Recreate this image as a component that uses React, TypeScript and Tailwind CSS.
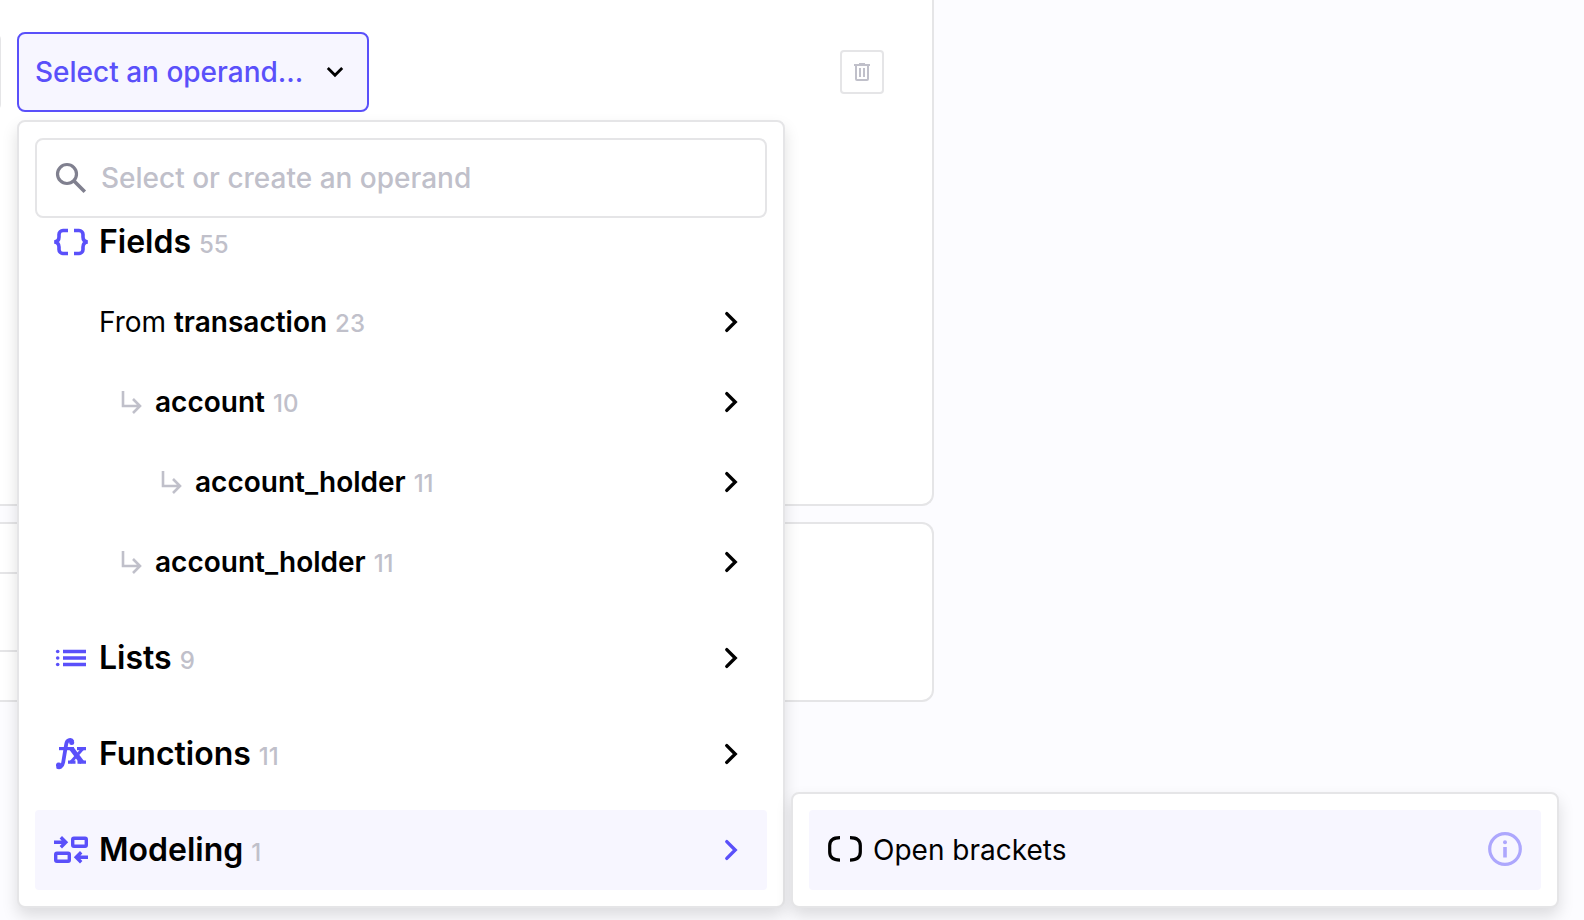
import type { ReactNode } from "react";

const ICON = "h-10 w-10 shrink-0";

function ChevronRight({ className = "" }: { className?: string }) {
  return (
    <svg viewBox="0 0 40 40" className={`${ICON} ${className}`} fill="none" stroke="currentColor" strokeWidth={3.4} aria-hidden>
      <path d="M15.8 11.6 24.2 20l-8.4 8.4" strokeLinecap="round" />
    </svg>
  );
}

function ChevronDown() {
  return (
    <svg viewBox="0 0 40 40" className={ICON} fill="none" stroke="currentColor" strokeWidth={2.8} aria-hidden>
      <path d="m12.8 16 7.2 7.2 7.2-7.2" />
    </svg>
  );
}

function SearchIcon() {
  return (
    <svg viewBox="0 0 40 40" className={`${ICON} text-[#80808f]`} fill="none" stroke="currentColor" strokeWidth={3.2} aria-hidden>
      <circle cx="16" cy="16" r="9.5" />
      <path d="m22.8 22.8 11 11" strokeWidth={3.6} />
    </svg>
  );
}

function TrashIcon() {
  return (
    <svg viewBox="0 0 24 24" className="h-6 w-6" fill="none" stroke="currentColor" strokeWidth={2} aria-hidden>
      <path d="M4 5h16M9 4h6M6 5v14a1 1 0 0 0 1 1h10a1 1 0 0 0 1-1V5M10 8v9M14 8v9" />
    </svg>
  );
}

function FieldsIcon() {
  return (
    <svg viewBox="0 0 40 40" className={ICON} fill="none" stroke="currentColor" strokeWidth={3.6} aria-hidden>
      <path d="M17 8.5h-5a4 4 0 0 0-4 4V15c0 3-1.500 4.600-4.600 5 3.100.4 4.600 2 4.600 5v2.500a4 4 0 0 0 4 4h5" />
      <path d="M23 8.5h5a4 4 0 0 1 4 4V15c0 3 1.500 4.600 4.600 5-3.100.4-4.600 2-4.600 5v2.500a4 4 0 0 1-4 4h-5" />
    </svg>
  );
}

function ListsIcon() {
  return (
    <svg viewBox="0 0 40 40" className={ICON} fill="currentColor" aria-hidden>
      <circle cx="6.7" cy="13.5" r="1.8" />
      <circle cx="6.7" cy="20" r="1.8" />
      <circle cx="6.7" cy="26.5" r="1.8" />
      <path d="M12 11.8h23v3.4H12zM12 18.3h23v3.4H12zM12 24.8h23v3.4H12z" />
    </svg>
  );
}

function FunctionsIcon() {
  return (
    <svg viewBox="0 0 40 40" className={ICON} fill="none" stroke="currentColor" aria-hidden>
      <circle cx="20.7" cy="8.5" r="2.5" fill="currentColor" stroke="none" />
      <circle cx="7.7" cy="31.3" r="2.7" fill="currentColor" stroke="none" />
      <path d="M21.5 7.5c-1-2.2-5.5-2.2-6.3 2.7l-3 18c-.8 4.8-4 6-6 4.3" strokeWidth={3.8} />
      <path d="M8 14.6h15" strokeWidth={3.2} />
      <path d="m20.5 14.5 10.5 14" strokeWidth={4.8} />
      <path d="M32 14.5 19.5 28.5" strokeWidth={3} />
      <path d="M26 14.6h9M17 28.2h7.5M26.5 28.2H35" strokeWidth={3.2} />
    </svg>
  );
}

function ModelingIcon() {
  return (
    <svg viewBox="0 0 40 40" className={ICON} fill="none" stroke="currentColor" strokeWidth={3.4} aria-hidden>
      <path d="M3 12.3h12M9.8 7.3l5 5-5 5" />
      <rect x="21.7" y="8.2" width="13.6" height="8" rx="1.2" />
      <rect x="4.7" y="23.2" width="13.6" height="8" rx="1.2" />
      <path d="M37 27.3H25M30.2 22.3l-5 5 5 5" />
    </svg>
  );
}

function BracketsIcon() {
  return (
    <svg viewBox="0 0 40 40" className={ICON} fill="none" stroke="currentColor" strokeWidth={3.2} aria-hidden>
      <path d="M15 7.6c-6.500 0-10.300 2-10.300 8v6.500c0 6 3.800 8 10.300 8M25 7.600c6.500 0 10.300 2 10.300 8v6.500c0 6-3.800 8-10.300 8" />
    </svg>
  );
}

function InfoIcon() {
  return (
    <svg viewBox="0 0 40 40" className={`${ICON} text-[#ada7fd]`} fill="none" stroke="currentColor" strokeWidth={3.2} aria-hidden>
      <circle cx="20" cy="19" r="15.3" />
      <circle cx="20" cy="12.3" r="2" fill="currentColor" stroke="none" />
      <path d="M20 17v10.5" strokeWidth={3.6} />
    </svg>
  );
}

function NestedIcon() {
  return (
    <svg viewBox="0 0 32 32" className="h-8 w-8 shrink-0 text-[#c0c0ca]" fill="none" stroke="currentColor" strokeWidth={2.6} aria-hidden>
      <path d="M8 5v15h17M18 13l7 7-7 7" />
    </svg>
  );
}

function Count({ value }: { value: number }) {
  return <span className="text-2xl font-medium text-[#c0c0ca]">{value}</span>;
}

type SectionProps = { icon: ReactNode; label: string; count: number; active?: boolean };

function Section({ icon, label, count, active }: SectionProps) {
  return (
    <button
      type="button"
      className={`mt-4 flex h-20 w-full items-center gap-2 rounded px-4 text-left ${active ? "bg-[#f7f6ff]" : ""}`}
    >
      <span className="text-[#5a50fa]">{icon}</span>
      <span className="flex grow items-baseline gap-2">
        <span className="text-[32px] leading-10 font-semibold">{label}</span>
        <Count value={count} />
      </span>
      <ChevronRight className={active ? "text-[#5a50fa]" : ""} />
    </button>
  );
}

const tables = [
  { name: "transaction", count: 23, depth: 0 },
  { name: "account", count: 10, depth: 1 },
  { name: "account_holder", count: 11, depth: 2 },
  { name: "account_holder", count: 11, depth: 1 },
];

const indents = ["pl-16", "pl-20", "pl-30"];

function OperandMenu() {
  return (
    <div className="absolute top-full left-0 z-10 mt-2 flex items-end gap-1.5">
      <div className="w-[768px] rounded-lg border-2 border-[#e5e5e7] bg-white p-4 shadow-[0_8px_16px_rgba(0,0,0,0.13)]">
        <label className="flex h-20 items-center gap-2.5 rounded-lg border-2 border-[#e5e5e7] px-3.5">
          <SearchIcon />
          <input
            type="text"
            aria-label="Search operands"
            placeholder="Select or create an operand"
            className="min-w-0 grow text-[28px] font-medium outline-none placeholder:text-[#c0c0ca]"
          />
        </label>

        <div className="flex h-16 items-center gap-2 px-4 pb-4">
          <span className="text-[#5a50fa]">
            <FieldsIcon />
          </span>
          <h2 className="flex items-baseline gap-2 text-[32px] leading-10 font-semibold">
            Fields <Count value={55} />
          </h2>
        </div>
        {tables.map((t, i) => (
          <button
            key={i}
            type="button"
            className={`flex h-20 w-full items-center gap-2 rounded pr-4 text-left ${indents[t.depth]}`}
          >
            {t.depth > 0 && <NestedIcon />}
            <span className="flex grow items-baseline gap-2 text-[28px] leading-10">
              <span>
                {t.depth === 0 && "From "}
                <span className="font-semibold">{t.name}</span>
              </span>
              <Count value={t.count} />
            </span>
            <ChevronRight />
          </button>
        ))}

        <Section icon={<ListsIcon />} label="Lists" count={9} />
        <Section icon={<FunctionsIcon />} label="Functions" count={11} />
        <Section icon={<ModelingIcon />} label="Modeling" count={1} active />
      </div>

      <div className="w-[768px] rounded-lg border-2 border-[#e5e5e7] bg-white p-4 shadow-[0_8px_16px_rgba(0,0,0,0.13)]">
        <button type="button" className="flex h-20 w-full items-center gap-2 rounded bg-[#f7f6ff] px-4 text-left">
          <BracketsIcon />
          <span className="grow text-[28px] leading-10">Open brackets</span>
          <InfoIcon />
        </button>
      </div>
    </div>
  );
}

export default function App() {
  return (
    <div className="min-h-screen overflow-hidden bg-[#fcfcff] font-['Inter',sans-serif] text-black">
      <main className="mr-[650px] flex flex-col gap-4">
        <section className="min-h-[506px] rounded-br-xl border-r-2 border-b-2 border-[#e5e5e7] bg-white pt-8 pr-12">
          <div className="flex items-center gap-4">
            <div className="-ml-[15px] h-20 w-4 rounded-lg border-2 border-[#e5e5e7]" />
            <div className="relative">
              <button
                type="button"
                aria-haspopup="true"
                aria-expanded="true"
                className="flex h-20 items-center gap-3 rounded-lg border-2 border-[#5a50fa] bg-[#f7f6ff] pr-3 pl-4 text-[28px] font-medium"
              >
                <span className="text-[#5a50fa]">Select an operand...</span>
                <ChevronDown />
              </button>
              <OperandMenu />
            </div>
            <button
              type="button"
              aria-label="Delete"
              className="ml-auto flex h-11 w-11 items-center justify-center rounded border-2 border-[#e5e5e7] text-[#c0c0ca]"
            >
              <TrashIcon />
            </button>
          </div>
        </section>

        <section className="rounded-r-xl border-2 border-l-0 border-[#e5e5e7] bg-white py-12">
          <div className="h-20 w-96 rounded-r-lg border-2 border-l-0 border-[#e5e5e7]" />
        </section>
      </main>
    </div>
  );
}
